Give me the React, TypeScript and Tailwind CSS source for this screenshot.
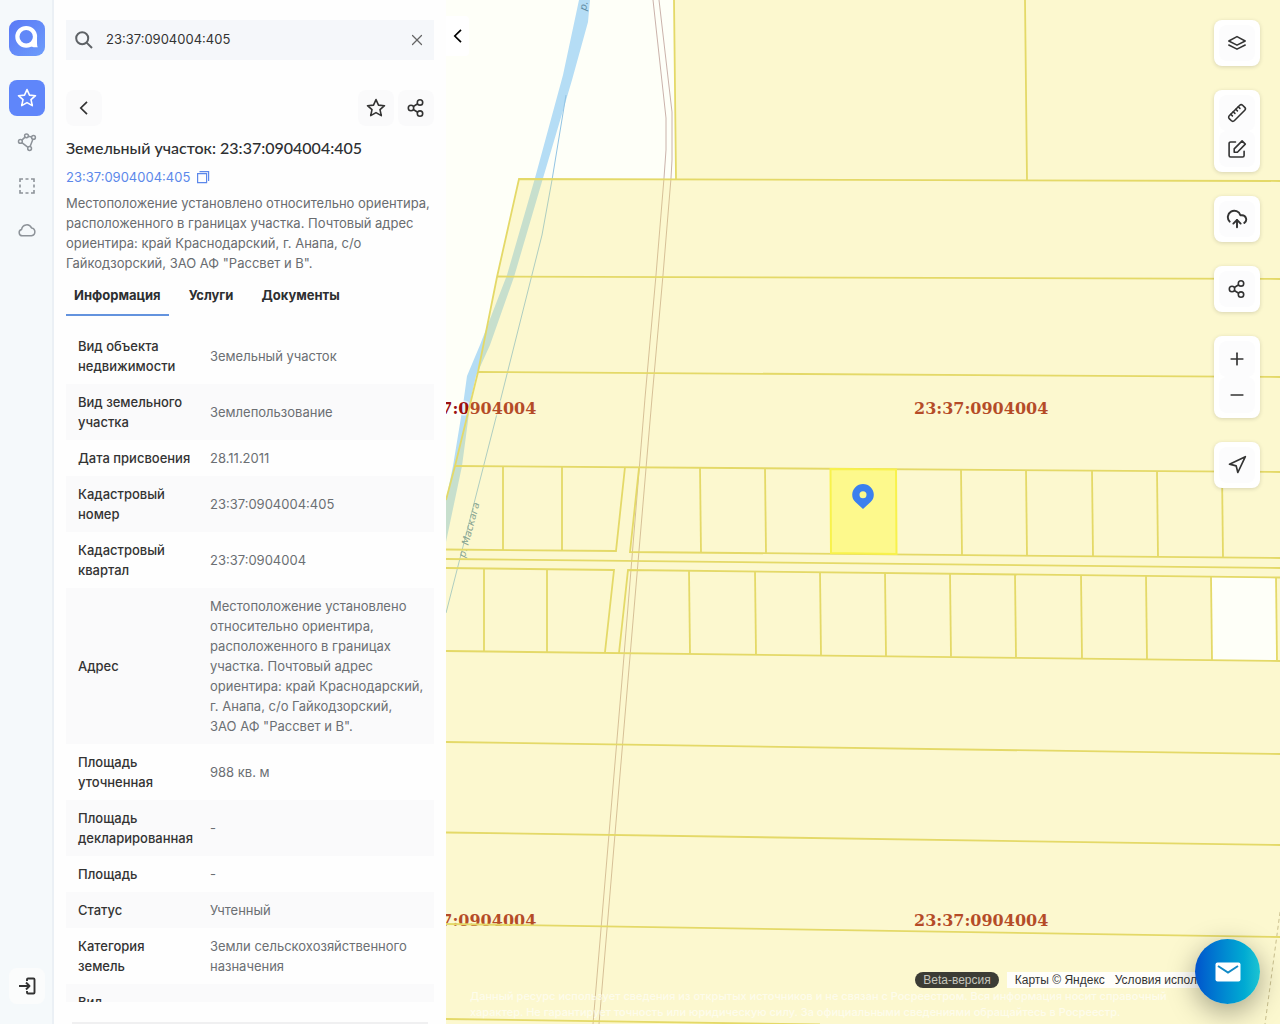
import type { ReactNode } from 'react'
import { CloudUpload, Minus, Navigation, Plus, Ruler, X } from 'lucide-react'

interface Row {
  label: string
  value: string
}

const rows: Row[] = [
  { label: 'Вид объекта недвижимости', value: 'Земельный участок' },
  { label: 'Вид земельного участка', value: 'Землепользование' },
  { label: 'Дата присвоения', value: '28.11.2011' },
  { label: 'Кадастровый номер', value: '23:37:0904004:405' },
  { label: 'Кадастровый квартал', value: '23:37:0904004' },
  {
    label: 'Адрес',
    value:
      'Местоположение установлено относительно ориентира, расположенного в границах участка. Почтовый адрес ориентира: край Краснодарский, г. Анапа, с/о Гайкодзорский, ЗАО\u00a0АФ "Рассвет и В".',
  },
  { label: 'Площадь уточненная', value: '988 кв. м' },
  { label: 'Площадь декларированная', value: '-' },
  { label: 'Площадь', value: '-' },
  { label: 'Статус', value: 'Учтенный' },
  { label: 'Категория земель', value: 'Земли сельскохозяйственного назначения' },
  { label: 'Вид разрешенного использования', value: 'Для садоводства' },
]

const tabs = ['Информация', 'Услуги', 'Документы']

function StarIcon() {
  return (
    <svg className="size-5" viewBox="0 0 20 20" fill="none" stroke="currentColor" strokeWidth={1.6} strokeLinejoin="round">
      <path d="M10 1.6l2.5 5.5 6 .6-4.5 4 1.3 5.9L10 14.6l-5.3 3 1.3-5.9-4.5-4 6-.6z" />
    </svg>
  )
}

function ShareIcon() {
  return (
    <svg className="size-5" viewBox="0 0 20 20" fill="none" stroke="currentColor" strokeWidth={1.6}>
      <circle cx="5" cy="10" r="2.7" />
      <circle cx="14" cy="4.4" r="2.7" />
      <circle cx="14" cy="15.6" r="2.7" />
      <path d="M7.3 8.5l4.4-2.7M7.3 11.5l4.4 2.7" />
    </svg>
  )
}

function PolygonIcon() {
  return (
    <svg className="size-5" viewBox="0 0 20 20" fill="none" stroke="currentColor" strokeWidth={1.5}>
      <circle cx="9.5" cy="3.8" r="1.9" />
      <circle cx="16.5" cy="5.4" r="1.9" />
      <circle cx="3.4" cy="9.4" r="1.9" />
      <circle cx="12.6" cy="16.5" r="1.9" />
      <path d="M11.4 4.2l3.2.8M8 5.1L4.9 8.1M15.9 7.2l-2.8 7.4M4.9 10.6l6.1 4.7" />
    </svg>
  )
}

function SelectionIcon() {
  return (
    <svg className="size-5" viewBox="0 0 20 20" fill="none" stroke="currentColor" strokeWidth={1.6}>
      <path d="M3 6V3h3M8.5 3h3M14 3h3v3M17 8.5v3M17 14v3h-3M11.5 17h-3M6 17H3v-3M3 11.5v-3" />
    </svg>
  )
}

function CloudIcon() {
  return (
    <svg className="size-5" viewBox="0 0 20 20" fill="none" stroke="currentColor" strokeWidth={1.5} strokeLinejoin="round">
      <path d="M5.5 15.8a3.2 3.2 0 0 1-.9-6.3 5.2 5.2 0 0 1 9.9-1.6 4 4 0 0 1 0 7.9z" />
    </svg>
  )
}

function LayersIcon() {
  return (
    <svg className="size-5" viewBox="0 0 20 20" fill="none" stroke="currentColor" strokeWidth={1.5} strokeLinejoin="round" strokeLinecap="round">
      <path d="M10 3.6L18.2 8 10 12.2 1.8 8z" />
      <path d="M1.8 12L10 16.2 18.2 12" />
    </svg>
  )
}

function EditIcon() {
  return (
    <svg className="size-5" viewBox="0 0 20 20" fill="none" stroke="currentColor" strokeWidth={1.6} strokeLinejoin="round" strokeLinecap="round">
      <path d="M8.5 3H3.6a1.5 1.5 0 0 0-1.5 1.5v12a1.5 1.5 0 0 0 1.5 1.5h12a1.5 1.5 0 0 0 1.5-1.5v-4.3" />
      <path d="M7.2 13.2v-3.3l7.9-8 3.2 3.2-7.9 8.1z" />
    </svg>
  )
}

function ChevronLeftIcon() {
  return (
    <svg className="size-5" viewBox="0 0 20 20" fill="none" stroke="currentColor" strokeWidth={1.7}>
      <path d="M13 3.8L6.8 10l6.2 6.2" />
    </svg>
  )
}

function IconButton({ label, children, className = '' }: { label: string; children: ReactNode; className?: string }) {
  return (
    <button
      type="button"
      aria-label={label}
      className={`flex size-9 items-center justify-center rounded-lg ${className}`}
    >
      {children}
    </button>
  )
}

function Sidebar() {
  return (
    <nav className="flex w-[54px] shrink-0 flex-col items-center bg-[#f5f9fb] py-5 text-[#8d9399] shadow-[inset_-2px_0_#ebf0f5]">
      <a href="#" aria-label="Главная" className="mb-6">
        <svg className="size-9" viewBox="0 0 36 36">
          <defs>
            <linearGradient id="logo" x1="0" y1="0" x2="1" y2="1">
              <stop offset="0" stopColor="#5a78f6" />
              <stop offset="1" stopColor="#6d9dfb" />
            </linearGradient>
          </defs>
          <rect width="36" height="36" rx="9" fill="url(#logo)" />
          <path d="M24 15h4v8.5q0 2.5.8 3.7c-3.6.6-7.8-.6-9.8-3.2z" fill="#fff" />
          <circle cx="17.2" cy="16.8" r="8.8" fill="#6288f8" stroke="#fff" strokeWidth="4.2" />
        </svg>
      </a>
      <div className="flex flex-col gap-2">
        <IconButton label="Избранное" className="bg-[#5f86fa] text-white">
          <StarIcon />
        </IconButton>
        <IconButton label="Полигон">
          <PolygonIcon />
        </IconButton>
        <IconButton label="Выделение">
          <SelectionIcon />
        </IconButton>
        <IconButton label="Облако">
          <CloudIcon />
        </IconButton>
      </div>
      <IconButton label="Войти" className="mt-auto bg-[#fbfcfc] text-[#333]">
        <svg className="size-5" viewBox="0 0 20 20" fill="none" stroke="currentColor" strokeWidth={1.9} strokeLinejoin="round">
          <path d="M10 5V3.5a1 1 0 0 1 1-1h5.5a1 1 0 0 1 1 1v13a1 1 0 0 1-1 1H11a1 1 0 0 1-1-1V15" />
          <path d="M2 10h10.3M9 6.5l3.5 3.5L9 13.5" />
        </svg>
      </IconButton>
    </nav>
  )
}

function InfoPanel() {
  return (
    <aside className="flex w-[392px] shrink-0 flex-col bg-[#fefefe] px-3 pt-5">
      <div className="flex h-10 shrink-0 items-center bg-[#f5f7fa] px-2">
        <svg className="size-5 shrink-0 text-[#5e6266]" viewBox="0 0 20 20" fill="none" stroke="currentColor" strokeWidth={2}>
          <circle cx="8.2" cy="8.2" r="6" />
          <path d="M12.6 12.6l5.4 5.4" />
        </svg>
        <input
          type="text"
          aria-label="Поиск"
          defaultValue="23:37:0904004:405"
          className="ml-3 min-w-0 flex-1 bg-transparent text-[13px] text-[#333] outline-none"
        />
        <button type="button" aria-label="Очистить" className="flex size-[18px] items-center justify-center text-[#666]">
          <X className="size-[18px]" strokeWidth={1.6} />
        </button>
      </div>

      <div className="mt-[30px] flex gap-1 text-[#333]">
        <IconButton label="Назад" className="mr-auto bg-[#fafafb]">
          <ChevronLeftIcon />
        </IconButton>
        <IconButton label="В избранное" className="bg-[#fafafb]">
          <StarIcon />
        </IconButton>
        <IconButton label="Поделиться" className="bg-[#fafafb]">
          <ShareIcon />
        </IconButton>
      </div>

      <h1 className="mt-2.5 font-[Lato,sans-serif] text-base leading-6 font-medium text-[#2d2f31]">
        Земельный участок: 23:37:0904004:405
      </h1>
      <div className="mt-[7px] flex items-center gap-1.5 text-[13px] leading-5 text-[#5c88ea]">
        <a href="#">23:37:0904004:405</a>
        <button type="button" aria-label="Скопировать">
          <svg className="size-3.5" viewBox="0 0 14 14" fill="none" stroke="currentColor" strokeWidth={1.2}>
            <path d="M1.6 3.6h9v9h-9z" />
            <path d="M3.5 1.6h9.1v9.3" />
          </svg>
        </button>
      </div>
      <p className="mt-1.5 text-[13px] leading-5 text-[#696c70]">
        Местоположение установлено относительно ориентира, расположенного в границах участка. Почтовый адрес
        ориентира: край Краснодарский, г. Анапа, с/о Гайкодзорский, ЗАО АФ "Рассвет и В".
      </p>

      <div role="tablist" className="mt-1 flex shrink-0 gap-3 text-[13px] leading-5 font-bold text-[#2d2f31]">
        {tabs.map((tab, i) => (
          <button
            key={tab}
            type="button"
            role="tab"
            aria-selected={i === 0}
            className={`border-b-2 px-2 pt-2 pb-[9px] ${i === 0 ? 'border-[#6393de]' : 'border-transparent'}`}
          >
            {tab}
          </button>
        ))}
      </div>

      <div className="mt-3 min-h-0 flex-1 overflow-y-auto [scrollbar-width:none]">
        <table className="w-full table-fixed text-left text-[13px] leading-5">
          <colgroup>
            <col className="w-[132px]" />
            <col />
          </colgroup>
          <tbody>
            {rows.map((row) => (
              <tr key={row.label} className="even:bg-[#fafafb]">
                <th scope="row" className="py-2 pr-1 pl-3 font-medium text-[#333]">
                  {row.label}
                </th>
                <td className="py-2 pr-2 pl-3 text-[#6b6f73]">{row.value}</td>
              </tr>
            ))}
          </tbody>
        </table>
      </div>
      <div className="mx-1.5 mt-5 h-0.5 shrink-0 bg-[#f0f0f1]" />
    </aside>
  )
}

const upperDividers = [700, 765, 961, 1026, 1092, 1157, 1222]
const lowerDividers = [689, 755, 820, 885, 950, 1015, 1081, 1146, 1211, 1276]

function CadastralMap() {
  return (
    <svg className="absolute inset-0 size-full" viewBox="446 0 834 1024" preserveAspectRatio="xMinYMin slice" role="img" aria-label="Кадастровая карта">
      <rect x="446" width="834" height="1024" fill="#fefff8" />

      {/* river and road */}
      <path
        d="M579 0L563 75 535 178 507 275 480 345 467 376 463 405 453 466 446 500V542L462 466 471 398 476 376 490 345 514 277 541 185 572 80 588 22 590 0z"
        fill="#b5ddf5"
      />
      <path d="M566 95L552 180 542 235 501 398 446 613" fill="none" stroke="#92c4e4" />
      <path d="M653 0L666 118V150L664 178 656 275 645 398 622 680 593 1024" fill="none" stroke="#c4a9a2" strokeWidth="0.9" />
      <path d="M659 0L672 112V160L671 178 663 275 652 398 628 680 599 1024" fill="none" stroke="#c4a9a2" strokeWidth="0.9" />
      <path d="M1281 905L1265 1024" fill="none" stroke="#b9b3a0" strokeDasharray="4 3" />

      <g fontFamily="'DejaVu Sans', sans-serif" fontSize="10" fontStyle="italic" fill="#5e8ca4">
        <text transform="translate(465 558) rotate(-75)">р. Маскага</text>
        <text transform="translate(586 11) rotate(-78)">р.</text>
      </g>

      <g fontFamily="'DejaVu Serif', serif" fontSize="16" fontWeight="700" fill="#9c1010" stroke="#fff" strokeOpacity="0.6" strokeWidth="3" paintOrder="stroke">
        <text x="402" y="414">23:37:0904004</text>
        <text x="914" y="414">23:37:0904004</text>
        <text x="402" y="926">23:37:0904004</text>
        <text x="914" y="926">23:37:0904004</text>
      </g>

      {/* parcels */}
      <path
        fillRule="evenodd"
        fill="#f8e664"
        fillOpacity="0.28"
        d="M674 0H1280V181L676 179zM519 179L1280 181V1024H446V500L455 466 478 372 497 277zM1211 577L1276 578V661L1212 660z"
      />
      <g fill="none" stroke="#e4d968" strokeWidth="1.8">
        <path d="M674 0L676 179M1025 0L1027 180" />
        <path d="M1280 181L519 179 497 277 478 372 455 466 446 500" />
        <path d="M497 276.5L1280 279M478 372L1280 377M455 466L1280 472" />
        <path d="M503 466V550M562 467V551M446 549.5L616 551 625 467M639 468L630 552 1280 558" />
        {upperDividers.map((x) => (
          <path key={x} d={`M${x} ${467 + (x - 640) * 0.008}L${x + 1} ${552 + (x - 640) * 0.009}`} />
        ))}
        <path d="M446 559L1280 568M446 568L614 570 605 652M619 653L628 570 1280 577.5" />
        <path d="M484 568V651M547 569V652" />
        {lowerDividers.map((x) => (
          <path key={x} d={`M${x} ${570 + (x - 628) * 0.011}L${x + 1} ${653 + (x - 628) * 0.012}`} />
        ))}
        <path d="M446 651L1280 661M446 742L1280 754M446 832.5L1280 845M446 924L1280 937M446 1019L820 1024.5" />
      </g>

      <path d="M830.5 469L896 469.5 896.5 554 831 553z" fill="#fdf98c" stroke="#f8f24c" strokeWidth="2" />
      <path
        fillRule="evenodd"
        fill="#3b80ee"
        d="M863 484a10.8 10.8 0 0 1 10.8 10.8c0 3.2-1.3 5.5-3.2 7.3L863 509l-7.6-6.9c-1.9-1.8-3.2-4.1-3.2-7.3A10.8 10.8 0 0 1 863 484zm0 7.3a3.5 3.5 0 1 0 0 7 3.5 3.5 0 0 0 0-7z"
      />
    </svg>
  )
}

function ToolGroup({ children }: { children: ReactNode }) {
  return <div className="rounded-lg bg-white p-[5px] shadow-[0_1px_4px_rgba(0,0,0,0.15)]">{children}</div>
}

function MapTools() {
  return (
    <div className="absolute top-5 right-5 flex flex-col gap-6 text-[#333]">
      <ToolGroup>
        <IconButton label="Слои" className="bg-[#fcfcfd]">
          <LayersIcon />
        </IconButton>
      </ToolGroup>
      <ToolGroup>
        <IconButton label="Линейка" className="bg-[#fcfcfd]">
          <Ruler className="size-5 -scale-x-100" strokeWidth={1.9} />
        </IconButton>
        <IconButton label="Рисование" className="bg-[#fcfcfd]">
          <EditIcon />
        </IconButton>
      </ToolGroup>
      <ToolGroup>
        <IconButton label="Загрузить" className="bg-[#fcfcfd]">
          <CloudUpload className="size-[22px]" strokeWidth={2.1} />
        </IconButton>
      </ToolGroup>
      <ToolGroup>
        <IconButton label="Поделиться картой" className="bg-[#fcfcfd]">
          <ShareIcon />
        </IconButton>
      </ToolGroup>
      <ToolGroup>
        <IconButton label="Приблизить" className="bg-[#fcfcfd]">
          <Plus className="size-5" strokeWidth={2} />
        </IconButton>
        <IconButton label="Отдалить" className="bg-[#fcfcfd]">
          <Minus className="size-5" strokeWidth={2} />
        </IconButton>
      </ToolGroup>
      <ToolGroup>
        <IconButton label="Моё местоположение" className="bg-[#fcfcfd]">
          <Navigation className="size-5" strokeWidth={2} />
        </IconButton>
      </ToolGroup>
    </div>
  )
}

export default function App() {
  return (
    <div className="flex h-screen overflow-hidden font-[Inter,sans-serif]">
      <Sidebar />
      <InfoPanel />
      <main className="relative min-w-0 flex-1 overflow-hidden">
        <CadastralMap />
        <button
          type="button"
          aria-label="Свернуть панель"
          className="absolute top-4 left-0 flex h-10 w-[23px] items-center justify-center rounded-r-sm bg-white text-black"
        >
          <ChevronLeftIcon />
        </button>
        <MapTools />

        <p className="absolute right-20 bottom-1 left-6 text-[11px] leading-4 font-medium text-white/60">
          Данный ресурс использует сведения из открытых источников и не связан с Росреестром. Вся информация носит
          справочный характер. Не гарантирует точность или юридическую силу. За официальными сведениями обращайтесь в
          Росреестр.
        </p>

        <div className="absolute right-6 bottom-9 flex gap-2 font-['Liberation_Sans',sans-serif] text-xs leading-4">
          <span className="rounded-full bg-[#3c3c35] px-2 text-[#c6c6bd]">Beta-версия</span>
          <div className="flex gap-2.5 bg-white/90 px-2 whitespace-nowrap text-[#333]">
            <span>Карты © Яндекс</span>
            <a href="#">Условия использования</a>
          </div>
        </div>

        <button
          type="button"
          aria-label="Написать нам"
          className="absolute right-5 bottom-5 flex size-[65px] items-center justify-center rounded-full bg-linear-to-r from-[#0653cc] to-[#1cc4d2] shadow-[0_8px_28px_rgba(0,0,0,0.35)]"
        >
          <svg className="h-5 w-[26px]" viewBox="0 0 26 20">
            <rect x="0.5" y="0.5" width="25" height="19" rx="2" fill="#fff" />
            <path d="M3 4l10 6.5L23 4" fill="none" stroke="#128ac6" strokeWidth="2" />
          </svg>
        </button>
      </main>
    </div>
  )
}
